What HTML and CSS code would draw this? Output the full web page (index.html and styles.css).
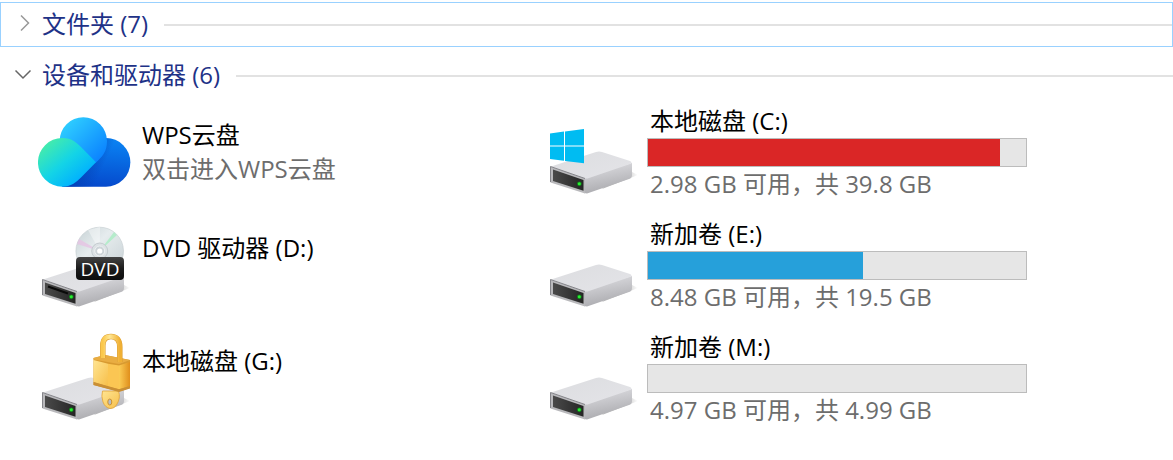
FILE: index.html
```html
<!DOCTYPE html>
<html lang="zh-CN">
<head>
    <meta charset="UTF-8">
    <meta name="viewport" content="width=device-width, initial-scale=1.0">
    <title>此电脑</title>
    <link rel="stylesheet" href="styles.css">
</head>
<body>
    <!-- 公用图形 -->
    <svg class="defs" width="0" height="0" aria-hidden="true">
        <defs>
            <linearGradient id="top" x1="0" y1="0" x2="1" y2="1">
                <stop offset="0" stop-color="#dcdde0"/>
                <stop offset="1" stop-color="#e4e4e8"/>
            </linearGradient>
            <linearGradient id="side" x1="0.2" y1="0" x2="0.5" y2="1">
                <stop offset="0" stop-color="#dfdfe3"/>
                <stop offset="1" stop-color="#a8a8ac"/>
            </linearGradient>
            <linearGradient id="panel" x1="0" y1="0" x2="1" y2="0">
                <stop offset="0" stop-color="#4a4a4a"/>
                <stop offset="1" stop-color="#252525"/>
            </linearGradient>
            <linearGradient id="shadow" x1="0" y1="0" x2="1" y2="0">
                <stop offset="0.6" stop-color="#bbb"/>
                <stop offset="1" stop-color="#fff"/>
            </linearGradient>
            <symbol id="drive" viewBox="0 0 96 96">
                <path d="M60 80L86 67L92 70L56 84z" fill="url(#shadow)"/>
                <path d="M39 72L86 58V70Q86 73 83 74L41 88.5L38 88z" fill="url(#side)"/>
                <path d="M5 61.5L50 47Q53 46 56 47L84 56Q87 57.5 84 59L43 73Q40 74 37 73z" fill="url(#top)"/>
                <path d="M4.5 61.5L39 73.5V88.5L4.5 77.5z" fill="#b9b9bc"/>
                <path d="M4.5 77V61.5L39 73.500" fill="none" stroke="#85858a"/>
                <path d="M7 64.5L37.5 75V85.8L7 76z" fill="url(#panel)"/>
                <circle cx="33.3" cy="78.8" r="2.4" fill="#147a1c"/>
                <circle cx="33.3" cy="78.8" r="1.5" fill="#28f032"/>
            </symbol>
        </defs>
    </svg>

    <main>
        <section class="group">
            <h2 class="group-header focused">
                <button type="button" aria-expanded="false">
                    <svg class="chevron" viewBox="0 0 18 18"><path d="M7 1.5L14.5 9L7 16.5" stroke="#999"/></svg>
                    文件夹 (7)
                </button>
            </h2>
        </section>

        <section class="group">
            <h2 class="group-header">
                <button type="button" aria-expanded="true">
                    <svg class="chevron" viewBox="0 0 18 18"><path d="M1.5 5.500L9 13L16.5 5.5" stroke="#666"/></svg>
                    设备和驱动器 (6)
                </button>
            </h2>

            <ul class="items">
                <li class="item">
                    <svg class="icon" viewBox="0 0 96 96" aria-hidden="true">
                        <defs>
                            <linearGradient id="c1" x1="0.1" y1="0.1" x2="0.9" y2="0.9">
                                <stop offset="0" stop-color="#2fd0ff"/>
                                <stop offset="1" stop-color="#0a80ff"/>
                            </linearGradient>
                            <linearGradient id="c2" x1="0.1" y1="0.2" x2="0.75" y2="0.85">
                                <stop offset="0" stop-color="#41eab0"/>
                                <stop offset="0.5" stop-color="#14d4e6"/>
                                <stop offset="1" stop-color="#00b0ff"/>
                            </linearGradient>
                            <linearGradient id="c3" x1="0.6" y1="0" x2="0.5" y2="1">
                                <stop offset="0" stop-color="#0a84f4"/>
                                <stop offset="1" stop-color="#0549cc"/>
                            </linearGradient>
                            <linearGradient id="c4" x1="0.2" y1="0.8" x2="0.5" y2="0.9">
                                <stop offset="0" stop-color="#0440b0" stop-opacity="0.7"/>
                                <stop offset="1" stop-color="#0440b0" stop-opacity="0"/>
                            </linearGradient>
                        </defs>
                        <path d="M68 33A24.3 24.3 0 0 1 68 81.7H24L50 45z" fill="url(#c3)"/>
                        <path d="M68 33A24.3 24.3 0 0 1 68 81.7H24L50 45z" fill="url(#c4)"/>
                        <path d="M21.6 36A23.7 23.7 0 0 1 69 36C69 47 64 52 58 57.5L30 60z" fill="url(#c1)"/>
                        <path d="M24.3 33C34 33 39 38 43 42L58 57.3L43 72.5C38 77.5 33 81.7 24.3 81.7A24.35 24.35 0 0 1 24.3 33z" fill="url(#c2)"/>
                    </svg>
                    <div class="info">
                        <a class="name" href="#wps">WPS云盘</a>
                        <span class="detail">双击进入WPS云盘</span>
                    </div>
                </li>

                <li class="item">
                    <svg class="icon" viewBox="0 0 96 96" aria-hidden="true">
                        <use href="#drive"/>
                        <path d="M4 28.500L18 26.600V40.500H4zM19 26.500L38 24V40.500H19zM4 41.500H18V55.700L4 54zM19 41.500H38V58.300L19 55.900z" fill="#00bcf2"/>
                    </svg>
                    <div class="info">
                        <a class="name" href="#c">本地磁盘 (C:)</a>
                        <progress class="usage full" value="93" max="100" aria-label="本地磁盘 (C:)"></progress>
                        <span class="detail">2.98 GB 可用，共 39.8 GB</span>
                    </div>
                </li>

                <li class="item">
                    <svg class="icon" viewBox="0 0 96 96" aria-hidden="true">
                        <defs>
                            <linearGradient id="disc" x1="0" y1="0" x2="1" y2="1">
                                <stop offset="0" stop-color="#c4d0d3"/>
                                <stop offset="0.4" stop-color="#e6ecee"/>
                                <stop offset="1" stop-color="#c6cfd3"/>
                            </linearGradient>
                            <linearGradient id="label" x1="0" y1="0" x2="0" y2="1">
                                <stop offset="0" stop-color="#444"/>
                                <stop offset="0.5" stop-color="#1c1c1c"/>
                                <stop offset="1" stop-color="#0c0c0c"/>
                            </linearGradient>
                        </defs>
                        <use href="#drive"/>
                        <path d="M10 68.5L30 75.5" stroke="#0a0a0a" stroke-width="2"/>
                        <circle cx="61.7" cy="33" r="23.8" fill="url(#disc)" stroke="#c3cbce" stroke-width="0.6"/>
                        <path d="M61.7 33L39 26L41 21z" fill="#e6c3e4" opacity="0.8"/>
                        <path d="M61.7 33L76 14L79 17z" fill="#b5eccb"/>
                        <path d="M61.7 33L50 12L62 9z" fill="#fff" opacity="0.4"/>
                        <circle cx="61.7" cy="33" r="8" fill="#dce2e5" stroke="#bcc4c8" stroke-width="0.8"/>
                        <circle cx="61.7" cy="33" r="5" fill="#cdd4d8" stroke="#eef1f2"/>
                        <circle cx="61.7" cy="33" r="2.6" fill="#fff"/>
                        <rect x="38" y="39" width="48" height="23" rx="4" fill="url(#label)"/>
                        <text class="disc-label" x="62" y="57.5" text-anchor="middle">DVD</text>
                    </svg>
                    <div class="info">
                        <a class="name" href="#d">DVD 驱动器 (D:)</a>
                    </div>
                </li>

                <li class="item">
                    <svg class="icon" viewBox="0 0 96 96" aria-hidden="true"><use href="#drive"/></svg>
                    <div class="info">
                        <a class="name" href="#e">新加卷 (E:)</a>
                        <progress class="usage" value="57" max="100" aria-label="新加卷 (E:)"></progress>
                        <span class="detail">8.48 GB 可用，共 19.5 GB</span>
                    </div>
                </li>

                <li class="item">
                    <svg class="icon" viewBox="0 0 96 96" aria-hidden="true">
                        <defs>
                            <linearGradient id="gold" x1="0" y1="0" x2="1" y2="0">
                                <stop offset="0" stop-color="#fbc84c"/>
                                <stop offset="0.4" stop-color="#ffe794"/>
                                <stop offset="1" stop-color="#f0b034"/>
                            </linearGradient>
                            <linearGradient id="front" x1="0" y1="0" x2="1" y2="1">
                                <stop offset="0" stop-color="#ffe592"/>
                                <stop offset="1" stop-color="#f7bf4a"/>
                            </linearGradient>
                            <linearGradient id="right" x1="0" y1="0" x2="1" y2="0">
                                <stop offset="0" stop-color="#fbcc55"/>
                                <stop offset="1" stop-color="#e08f1c"/>
                            </linearGradient>
                        </defs>
                        <use href="#drive"/>
                        <!-- 钥匙 -->
                        <path d="M64.5 60H80.500Q83 67 78.500 74Q76 78 72 77.500Q67 76.500 65 71Q63 65 64.500 60z" fill="url(#front)" stroke="#dfa23a" stroke-width="0.8"/>
                        <ellipse cx="71.8" cy="71" rx="2" ry="3" fill="#b8bcc4" stroke="#cf922c"/>
                        <!-- 锁 -->
                        <path d="M55.5 27L67 24L92 29V57L81 60.500L55.500 54z" fill="#d89a30"/>
                        <path d="M55.5 27L67 24L92 29L81 33L55.500 28.500z" fill="#e9ad42"/>
                        <path d="M55.500 29L70 32.800V55.500L55.500 51z" fill="url(#front)"/>
                        <path d="M70 32.800L81 34.500V58.300L70 55.500z" fill="#fbc653"/>
                        <path d="M81 34.500L92 31V55L81 58.300z" fill="url(#right)"/>
                        <path d="M55.500 51L81 58.300L92 55V57.500L81 61L55.500 54z" fill="#c98f35"/>
                        <path d="M64.8 27V14.500C64.800 8 68 5.500 73 5.500C78.500 5.500 81.800 9 81.800 16V31" fill="none" stroke="#dc9d30" stroke-width="5.5"/>
                        <path d="M64.8 27V14.500C64.800 8 68 5.500 73 5.500C78.500 5.500 81.800 9 81.800 16V31" fill="none" stroke="url(#gold)" stroke-width="4.4"/>
                    </svg>
                    <div class="info">
                        <a class="name" href="#g">本地磁盘 (G:)</a>
                    </div>
                </li>

                <li class="item">
                    <svg class="icon" viewBox="0 0 96 96" aria-hidden="true"><use href="#drive"/></svg>
                    <div class="info">
                        <a class="name" href="#m">新加卷 (M:)</a>
                        <progress class="usage" value="0" max="100" aria-label="新加卷 (M:)"></progress>
                        <span class="detail">4.97 GB 可用，共 4.99 GB</span>
                    </div>
                </li>
            </ul>
        </section>
    </main>
</body>
</html>
```

FILE: styles.css
```css
* {
    box-sizing: border-box;
}
body {
    margin: 0;
    font-family: "Open Sans", "Noto Sans CJK SC", sans-serif;
    font-size: 24px;
    background-color: #fff;
    color: #000;
}
.defs {
    position: absolute;
}
main {
    padding-top: 2px;
}
.group-header {
    display: flex;
    align-items: center;
    gap: 16px;
    height: 45px;
    margin: 0 0 6px;
    padding-left: 14px;
    font-size: 24px;
    font-weight: normal;
}
.group-header::after {
    content: "";
    flex: 1;
    height: 2px;
    background-color: #e2e2e2;
}
.group-header.focused {
    padding-left: 13px;
    border: 1px solid #99d1ff;
}
.group-header button {
    display: flex;
    align-items: center;
    gap: 10px;
    padding: 0 0 4px;
    border: 0;
    background: none;
    font: inherit;
    color: #1e3287;
}
.chevron {
    width: 18px;
    height: 18px;
    fill: none;
    stroke-width: 1.5;
}
.items {
    display: grid;
    grid-template-columns: repeat(auto-fill, 508px);
    row-gap: 17px;
    margin: 0;
    padding: 0 0 0 38px;
    list-style: none;
}
.item {
    display: flex;
    align-items: center;
    gap: 5px;
    height: 96px;
}
.icon {
    width: 96px;
    height: 96px;
    margin-top: 2px;
}
.info {
    display: flex;
    flex-direction: column;
    min-height: 68px;
    line-height: 34px;
}
.name,
.detail {
    padding-left: 3px;
    white-space: nowrap;
}
.name {
    color: #000;
    text-decoration: none;
}
.detail {
    color: #6d6d6d;
}
.disc-label {
    font-size: 19px;
    fill: #fff;
}
.usage {
    appearance: none;
    width: 380px;
    height: 29px;
    border: 1px solid #bcbcbc;
    background-color: #e6e6e6;
}
.usage::-webkit-progress-bar {
    background-color: #e6e6e6;
}
.usage::-webkit-progress-value {
    background-color: #26a0da;
}
.usage.full::-webkit-progress-value {
    background-color: #da2626;
}
```
